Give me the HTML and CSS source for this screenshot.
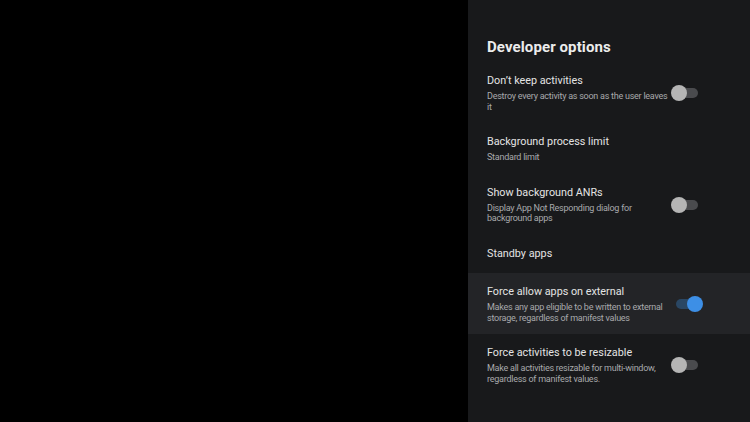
FILE: index.html
```html
<!DOCTYPE html>
<html lang="en">
<head>
    <meta charset="UTF-8">
    <meta name="viewport" content="width=device-width, initial-scale=1.0">
    <title>Developer options</title>
    <link rel="stylesheet" href="styles.css">
</head>
<body>

<div class="screen">
    <div class="backdrop"></div>

    <div class="panel">
        <h2 class="panel-title">Developer options</h2>

        <div class="pref">
            <div class="pref-text">
                <div class="pref-title">Don’t keep activities</div>
                <div class="pref-summary">Destroy every activity as soon as the user leaves it</div>
            </div>
            <div class="switch"><span class="switch-track"></span><span class="switch-thumb"></span></div>
        </div>

        <div class="pref">
            <div class="pref-text">
                <div class="pref-title">Background process limit</div>
                <div class="pref-summary">Standard limit</div>
            </div>
        </div>

        <div class="pref">
            <div class="pref-text">
                <div class="pref-title">Show background ANRs</div>
                <div class="pref-summary">Display App Not Responding dialog for background apps</div>
            </div>
            <div class="switch"><span class="switch-track"></span><span class="switch-thumb"></span></div>
        </div>

        <div class="pref pref-single">
            <div class="pref-text">
                <div class="pref-title">Standby apps</div>
            </div>
        </div>

        <div class="pref focused">
            <div class="pref-text">
                <div class="pref-title">Force allow apps on external</div>
                <div class="pref-summary">Makes any app eligible to be written to external storage, regardless of manifest values</div>
            </div>
            <div class="switch on"><span class="switch-track"></span><span class="switch-thumb"></span></div>
        </div>

        <div class="pref">
            <div class="pref-text">
                <div class="pref-title">Force activities to be resizable</div>
                <div class="pref-summary">Make all activities resizable for multi-window, regardless of manifest values.</div>
            </div>
            <div class="switch"><span class="switch-track"></span><span class="switch-thumb"></span></div>
        </div>
    </div>
</div>

</body>
</html>
```

FILE: styles.css
```css
html, body { margin: 0; padding: 0; background-color: #000; }
body { font-family: Roboto, "Noto Sans", sans-serif; width: 750px; height: 422px; overflow: hidden; }
.screen { display: flex; height: 422px; }
.backdrop { width: 468px; background-color: #000; }
.panel { width: 282px; background-color: #18191b; padding-top: 37px; box-sizing: border-box; }
.panel-title { margin: 0 0 5px 19px; font-size: 15px; line-height: 20px; font-weight: 700; color: #ececec; letter-spacing: 0.1px; }
.pref { display: flex; align-items: center; padding: 12px 47px 11px 19px; }
.pref-single { padding-bottom: 12.5px; }
.pref.focused { background-color: #232427; }
.pref-text { width: 182px; }
.pref-title { font-size: 10.8px; line-height: 14px; color: #e4e4e4; }
.pref-summary { margin-top: 3px; font-size: 9px; line-height: 10.5px; color: #a8a9ac; letter-spacing: -0.25px; }
/* toggle switch */
.switch { position: relative; width: 32px; height: 16px; margin-left: auto; }
.switch-track { position: absolute; left: 5px; right: 5px; top: 3px; height: 10px; border-radius: 5px; background-color: #4a4b4e; }
.switch-thumb { position: absolute; left: 0; top: 0; width: 16px; height: 16px; border-radius: 50%; background-color: #b5b5b5; }
.switch.on .switch-track { background-color: #2a4764; }
.switch.on .switch-thumb { left: auto; right: 0; background-color: #3d8fe6; }
```
